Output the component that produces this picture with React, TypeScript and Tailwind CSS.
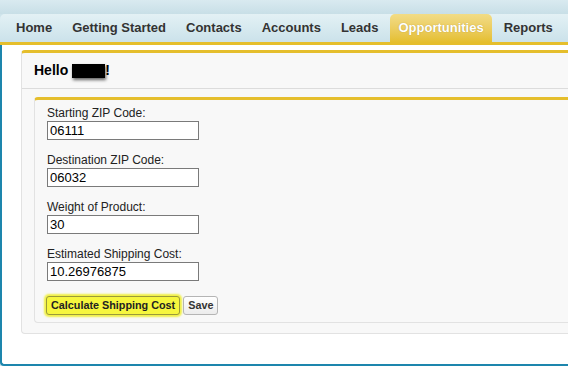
const tabs = ["Home", "Getting Started", "Contacts", "Accounts", "Leads", "Opportunities", "Reports"];

const fields = [
  { label: "Starting ZIP Code:", value: "06111" },
  { label: "Destination ZIP Code:", value: "06032" },
  { label: "Weight of Product:", value: "30" },
  { label: "Estimated Shipping Cost:", value: "10.26976875" },
];

export default function App() {
  return (
    <div className="w-[568px] h-[366px] overflow-hidden flex flex-col bg-[#cfe4eb] font-['Liberation_Sans',Arial,sans-serif]">
      {/* top strip */}
      <div className="h-[14px] bg-gradient-to-b from-[#d9eaf0] to-[#c8dfe7]" />

      {/* tab bar */}
      <div className="h-[28px] flex items-stretch pl-2 gap-1 rounded-tl-[5px] bg-gradient-to-b from-[#e3f1f5] to-[#cbe2ea]">
        {tabs.map((t) =>
          t === "Opportunities" ? (
            <div
              key={t}
              className="px-2 flex items-center whitespace-nowrap rounded-t-[5px] bg-gradient-to-b from-[#f2dc86] to-[#e5bf2e] text-white text-[13px] font-bold [text-shadow:0_0_1px_rgba(120,90,0,0.5)]"
            >
              {t}
            </div>
          ) : (
            <div key={t} className="px-2 flex items-center whitespace-nowrap text-[#333] text-[13px] font-bold">
              {t}
            </div>
          )
        )}
      </div>
      <div className="h-[3px] bg-[#e5be2c]" />

      {/* body */}
      <div className="flex-1 bg-white border-l-2 border-b-2 border-[#1d86ad] rounded-bl-[4px] pt-[5px] pl-[19px] overflow-hidden">
        <div className="w-[600px] bg-[#f8f8f8] border-t-[3px] border-t-[#e5be2c] border-l border-b border-[#e2e2e2] rounded-[4px] pb-[10px]">
          <div className="h-[36px] flex items-center pl-3 border-b border-[#dcdcdc] text-[14px] font-bold text-black">
            Hello&nbsp;
            <span className="inline-block w-[33px] h-[14px] bg-black shadow-[1px_2px_3px_rgba(0,0,0,0.6)]" />
            !
          </div>
          <div className="ml-3 mt-2 bg-[#f8f8f8] border-t-[3px] border-t-[#e5be2c] border-l border-b border-[#e2e2e2] rounded-[4px] pt-[6px] pb-[7px] pl-[12px]">
            {fields.map((f) => (
              <div key={f.label} className="flex flex-col mb-[13px]">
                <label className="text-[12px] leading-[14px] text-[#222] mb-px">{f.label}</label>
                <input
                  readOnly
                  value={f.value}
                  className="w-[152px] h-[19px] border border-[#7a7a7a] bg-white px-[2px] text-[13px] text-black outline-none font-['Liberation_Sans',Arial,sans-serif]"
                />
              </div>
            ))}
            <div className="flex items-center gap-[3px] mt-[15px] -ml-px">
              <button className="h-[19px] px-[4px] rounded-[3px] border border-[#9a9a3a] bg-[#f6f63e] shadow-[0_0_2px_2px_#f0f045] text-[10.8px] font-bold text-[#222] leading-none">
                Calculate Shipping Cost
              </button>
              <button className="h-[19px] px-[4px] rounded-[3px] border border-[#b5b5b5] bg-gradient-to-b from-white to-[#ececec] text-[10.8px] font-bold text-[#333] leading-none">
                Save
              </button>
            </div>
          </div>
        </div>
      </div>
    </div>
  );
}
